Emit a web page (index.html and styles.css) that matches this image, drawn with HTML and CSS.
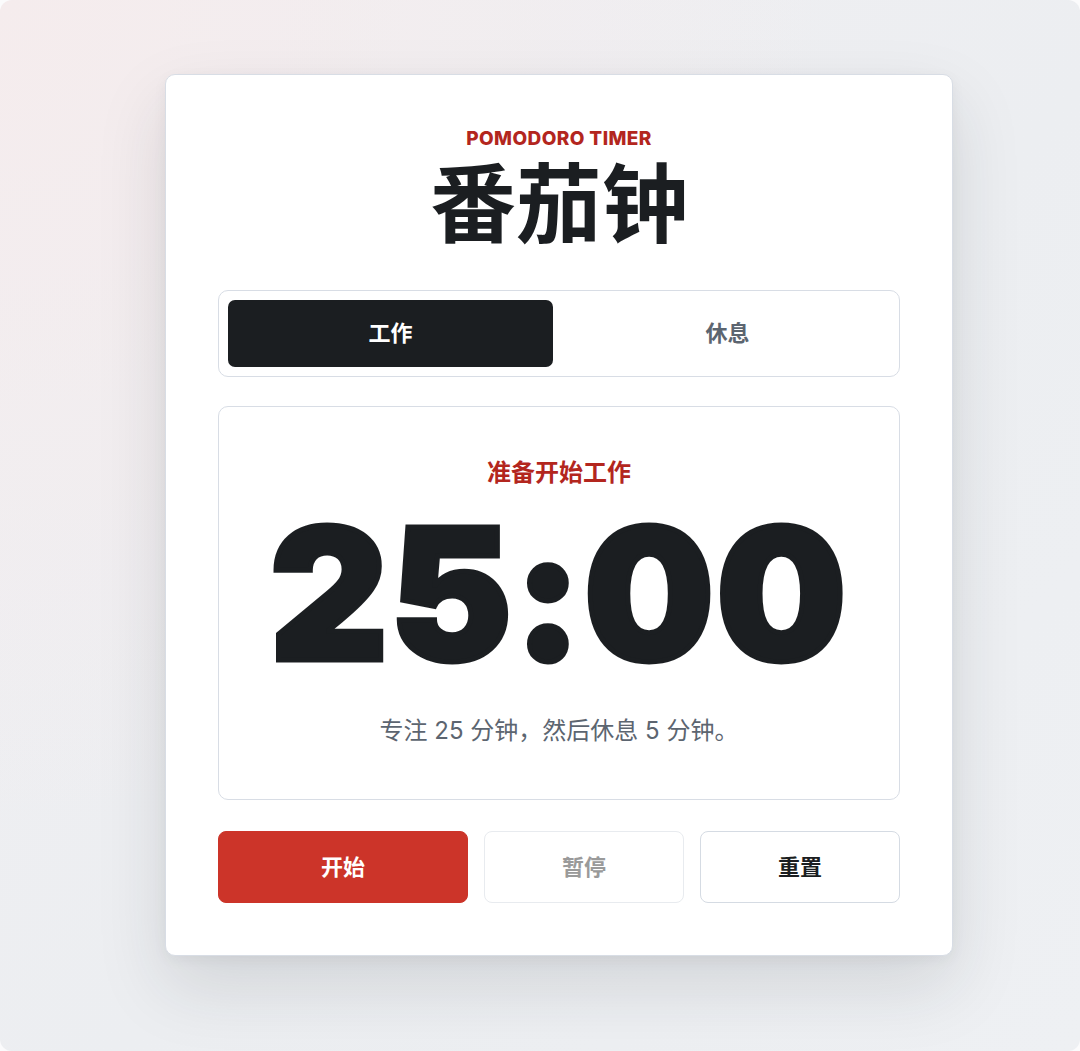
FILE: index.html
```html
<!DOCTYPE html>
<html lang="zh-CN">
<head>
    <meta charset="UTF-8">
    <meta name="viewport" content="width=device-width, initial-scale=1.0">
    <title>番茄钟</title>
    <link rel="stylesheet" href="styles.css">
</head>
<body>
    <div class="page">
        <div class="card">
            <header class="header">
                <div class="eyebrow">POMODORO TIMER</div>
                <h1>番茄钟</h1>
            </header>

            <div class="tabs">
                <button class="tab active">工作</button>
                <button class="tab">休息</button>
            </div>

            <div class="timer-box">
                <div class="status">准备开始工作</div>
                <div class="time">25:00</div>
                <p class="hint">专注 25 分钟，然后休息 5 分钟。</p>
            </div>

            <div class="actions">
                <button class="btn btn-start">开始</button>
                <button class="btn btn-pause" disabled>暂停</button>
                <button class="btn btn-reset">重置</button>
            </div>
        </div>
    </div>
</body>
</html>
```

FILE: styles.css
```css
* {
    box-sizing: border-box;
}

html,
body {
    margin: 0;
    padding: 0;
    background: #fbfbfc;
}

body {
    font-family: 'Inter', 'Noto Sans CJK SC', sans-serif;
    color: #1b1e21;
}

.page {
    height: 1051px;
    border-radius: 12px;
    overflow: hidden;
    padding: 74px 0 0 165px;
    background:
        radial-gradient(circle at 0% 0%, #f5eced 0%, rgba(245, 236, 237, 0) 55%),
        linear-gradient(135deg, #f1eff2 0%, #eceef1 55%, #eef0f3 100%);
}

.card {
    width: 788px;
    background-color: #fff;
    border: 1px solid #d8dde5;
    border-radius: 10px;
    padding: 52px;
    box-shadow: 0 30px 70px rgba(30, 35, 45, 0.13), 0 4px 14px rgba(30, 35, 45, 0.05);
}

.header {
    text-align: center;
    margin-bottom: 43px;
}

.eyebrow {
    color: #b3261e;
    font-size: 19px;
    line-height: 24px;
    font-weight: 800;
    letter-spacing: 0.4px;
}

h1 {
    margin: 0;
    font-family: 'Noto Sans CJK SC', sans-serif;
    font-size: 86px;
    line-height: 96px;
    font-weight: 700;
    color: #1b1e21;
}

.tabs {
    display: grid;
    grid-template-columns: 1fr 1fr;
    gap: 12px;
    padding: 9px;
    border: 1px solid #d8dde5;
    border-radius: 10px;
}

.tab {
    height: 67px;
    padding: 0 0 5px;
    border: none;
    border-radius: 7px;
    background: none;
    font-family: 'Noto Sans CJK SC', sans-serif;
    font-size: 22px;
    font-weight: 700;
    color: #5c6570;
    cursor: pointer;
}

.tab.active {
    background-color: #1b1e21;
    color: #fff;
}

.timer-box {
    margin-top: 29px;
    border: 1px solid #d8dde5;
    border-radius: 10px;
    padding: 48px 20px 52px;
    text-align: center;
}

.status {
    font-family: 'Noto Sans CJK SC', sans-serif;
    font-size: 24px;
    line-height: 32px;
    font-weight: 700;
    color: #b3261e;
}

.time {
    margin-top: 15px;
    font-family: 'Inter', sans-serif;
    font-size: 183px;
    line-height: 183px;
    font-weight: 900;
    letter-spacing: 2px;
    -webkit-text-stroke: 5px #1b1e21;
    color: #1b1e21;
}

.hint {
    margin: 30px 0 0;
    font-size: 24px;
    line-height: 32px;
    color: #5c6570;
}

.actions {
    margin-top: 31px;
    display: grid;
    grid-template-columns: 1.25fr 1fr 1fr;
    gap: 16px;
}

.btn {
    height: 72px;
    padding: 0 0 4px;
    border-radius: 8px;
    border: 1px solid #d5dbe3;
    background-color: #fff;
    font-family: 'Noto Sans CJK SC', sans-serif;
    font-size: 22px;
    font-weight: 700;
    color: #1b1e21;
    cursor: pointer;
}

.btn-start {
    background-color: #cc3429;
    border-color: #cc3429;
    color: #fff;
}

.btn-pause {
    border-color: #e8ebef;
    color: #9a9a9a;
    cursor: default;
}
```
